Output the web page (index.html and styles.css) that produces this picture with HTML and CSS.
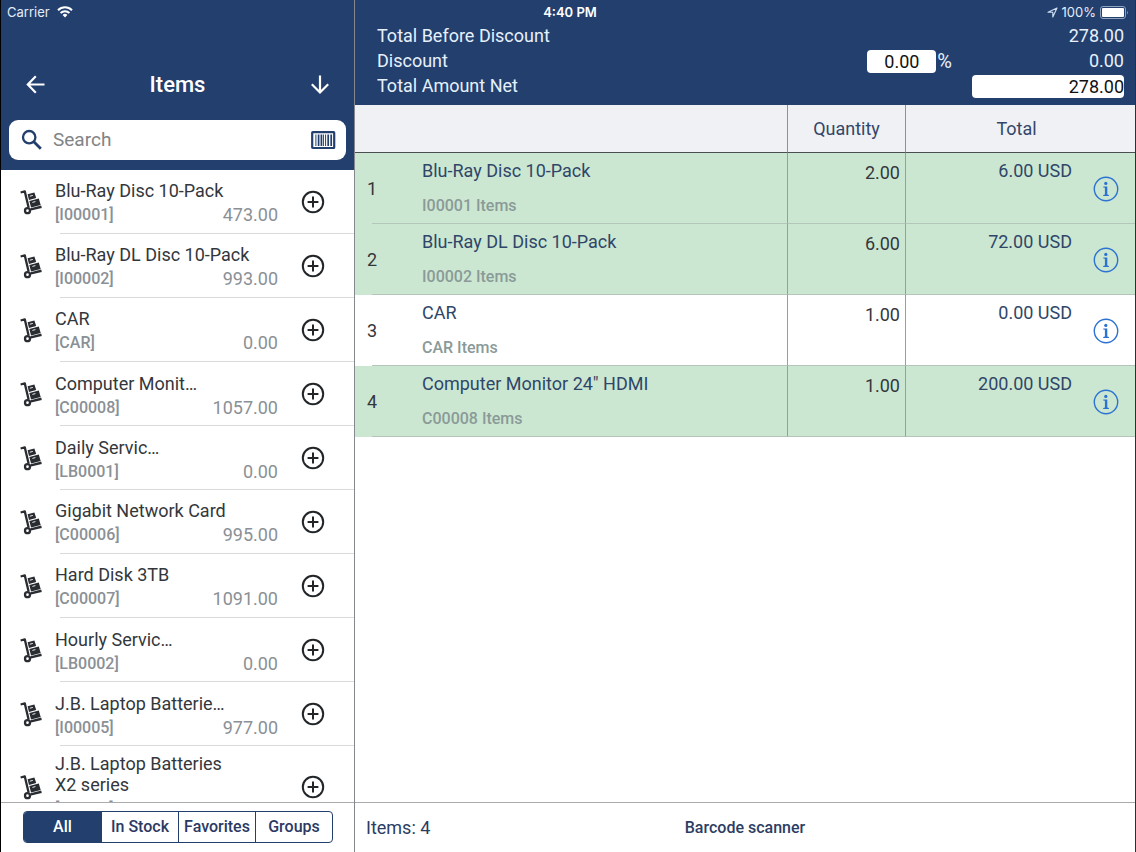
FILE: index.html
```html
<!DOCTYPE html>
<html lang="en">
<head>
<meta charset="utf-8">
<title>Items</title>
<link rel="stylesheet" href="styles.css">
</head>
<body>
<svg class="sprite" aria-hidden="true">
  <symbol id="dolly" viewBox="0 0 22 25">
    <path d="M.6 2.5 4.8 1.4 8.6 17.4" fill="none" stroke="currentColor" stroke-width="2.3" stroke-linejoin="round"/>
    <circle cx="7.5" cy="20.7" r="2.5" fill="none" stroke="currentColor" stroke-width="2.3"/>
    <path d="M10.8 19.4 21.5 16.8" stroke="currentColor" stroke-width="2.5"/>
    <path d="M7.6 4.2 14.4 2.4 16.2 8 9 9.9Z" fill="currentColor"/>
    <path d="M9.3 10.9 18.8 8.5 20.7 15.1 11.1 17.5Z" fill="currentColor"/>
    <path d="M9.8 6.2 12.8 5.4M12.4 12.4 15.4 11.6" stroke="#fff" stroke-width=".9"/>
  </symbol>
  <symbol id="plus" viewBox="0 0 24 24">
    <circle cx="12" cy="12" r="10.2" fill="none" stroke="currentColor" stroke-width="2"/>
    <path d="M12 6.6V17.4M6.6 12H17.4" stroke="currentColor" stroke-width="2"/>
  </symbol>
  <symbol id="info" viewBox="0 0 26 26">
    <circle cx="13" cy="13" r="11.7" fill="none" stroke="currentColor" stroke-width="1.4"/>
    <circle cx="12.8" cy="7.4" r="1.6" fill="currentColor"/>
    <path d="M10.3 10.4H14.3V18.6L15.9 19V20H10.2V19L11.9 18.6V11.8L10.3 11.4Z" fill="currentColor"/>
  </symbol>
</svg>

<div class="app">
  <div class="status">
    <div class="status-left">Carrier
      <svg width="16" height="12" viewBox="0 0 16 12"><path d="M1 4.2A10 10 0 0 1 15 4.2M3.6 7A6.3 6.3 0 0 1 12.4 7" fill="none" stroke="#fff" stroke-width="2"/><path d="M8 11.6 5.6 9A3.4 3.4 0 0 1 10.4 9Z" fill="#fff"/></svg>
    </div>
    <div class="status-time">4:40 PM</div>
    <div class="status-right">
      <svg width="11" height="11" viewBox="0 0 11 11"><path d="M10 1 1 5.2H5.8V10Z" fill="none" stroke="#cfe0f5" stroke-width="1.1" stroke-linejoin="round"/></svg>
      <span>100%</span>
      <svg width="29" height="13" viewBox="0 0 29 13"><rect x=".5" y=".5" width="25" height="12" rx="2.5" fill="none" stroke="#8fa3c0"/><rect x="2" y="2" width="22" height="9" rx="1" fill="#fff"/><path d="M27 4.5Q28.6 6.5 27 8.5Z" fill="#8fa3c0"/></svg>
    </div>
  </div>

  <aside class="side">
    <header class="side-head">
      <div class="nav">
        <button class="icon-btn" aria-label="Back"><svg width="24" height="24" viewBox="0 0 24 24"><path d="M21.5 11.5H5M12.8 3.3 4.8 11.5 12.8 19.7" fill="none" stroke="currentColor" stroke-width="2.2"/></svg></button>
        <h1>Items</h1>
        <button class="icon-btn" aria-label="Sort"><svg width="24" height="24" viewBox="0 0 24 24"><path d="M12 2.5V19.5M3.8 11.3 12 19.5 20.2 11.3" fill="none" stroke="currentColor" stroke-width="2.2"/></svg></button>
      </div>
      <div class="search">
        <svg width="22" height="22" viewBox="0 0 22 22"><circle cx="8.2" cy="8.2" r="6.2" fill="none" stroke="#233f6d" stroke-width="2.3"/><path d="M12.8 12.8 19.8 19.8" stroke="#233f6d" stroke-width="2.8"/></svg>
        <input type="text" placeholder="Search" aria-label="Search">
        <button class="icon-btn" aria-label="Scan barcode"><svg width="26" height="20" viewBox="0 0 26 20"><rect x="2.2" y="2.2" width="22" height="15.8" rx=".6" fill="none" stroke="#233f6d" stroke-width="2.2"/><path d="M5.9 4.5V16M13.4 4.5V16M15.6 4.5V16" stroke="#233f6d" stroke-width="1"/><path d="M8.6 4.5V16M11.4 4.5V16M18.2 4.5V16M21.2 4.5V16" stroke="#233f6d" stroke-width="1.7"/></svg></button>
      </div>
    </header>

    <ul class="items">
      <li><svg class="dolly"><use href="#dolly"/></svg><div class="info"><p class="name">Blu-Ray Disc 10-Pack</p><p class="meta"><span>[I00001]</span><b>473.00</b></p></div><button class="icon-btn add" aria-label="Add Blu-Ray Disc 10-Pack"><svg><use href="#plus"/></svg></button></li>
      <li><svg class="dolly"><use href="#dolly"/></svg><div class="info"><p class="name">Blu-Ray DL Disc 10-Pack</p><p class="meta"><span>[I00002]</span><b>993.00</b></p></div><button class="icon-btn add" aria-label="Add Blu-Ray DL Disc 10-Pack"><svg><use href="#plus"/></svg></button></li>
      <li><svg class="dolly"><use href="#dolly"/></svg><div class="info"><p class="name">CAR</p><p class="meta"><span>[CAR]</span><b>0.00</b></p></div><button class="icon-btn add" aria-label="Add CAR"><svg><use href="#plus"/></svg></button></li>
      <li class="cut"><svg class="dolly"><use href="#dolly"/></svg><div class="info"><p class="name">Computer Monit…</p><p class="meta"><span>[C00008]</span><b>1057.00</b></p></div><button class="icon-btn add" aria-label="Add Computer Monitor"><svg><use href="#plus"/></svg></button></li>
      <li class="cut"><svg class="dolly"><use href="#dolly"/></svg><div class="info"><p class="name">Daily Servic…</p><p class="meta"><span>[LB0001]</span><b>0.00</b></p></div><button class="icon-btn add" aria-label="Add Daily Service"><svg><use href="#plus"/></svg></button></li>
      <li><svg class="dolly"><use href="#dolly"/></svg><div class="info"><p class="name">Gigabit Network Card</p><p class="meta"><span>[C00006]</span><b>995.00</b></p></div><button class="icon-btn add" aria-label="Add Gigabit Network Card"><svg><use href="#plus"/></svg></button></li>
      <li><svg class="dolly"><use href="#dolly"/></svg><div class="info"><p class="name">Hard Disk 3TB</p><p class="meta"><span>[C00007]</span><b>1091.00</b></p></div><button class="icon-btn add" aria-label="Add Hard Disk 3TB"><svg><use href="#plus"/></svg></button></li>
      <li class="cut"><svg class="dolly"><use href="#dolly"/></svg><div class="info"><p class="name">Hourly Servic…</p><p class="meta"><span>[LB0002]</span><b>0.00</b></p></div><button class="icon-btn add" aria-label="Add Hourly Service"><svg><use href="#plus"/></svg></button></li>
      <li class="cut"><svg class="dolly"><use href="#dolly"/></svg><div class="info"><p class="name">J.B. Laptop Batterie…</p><p class="meta"><span>[I00005]</span><b>977.00</b></p></div><button class="icon-btn add" aria-label="Add J.B. Laptop Batteries"><svg><use href="#plus"/></svg></button></li>
      <li class="tall"><svg class="dolly"><use href="#dolly"/></svg><div class="info"><p class="name">J.B. Laptop Batteries<br>X2 series</p><p class="meta"><span>[I00004]</span><b>944.00</b></p></div><button class="icon-btn add" aria-label="Add J.B. Laptop Batteries X2 series"><svg><use href="#plus"/></svg></button></li>
    </ul>

    <footer class="side-foot">
      <div class="segments">
        <button class="on">All</button><button>In Stock</button><button>Favorites</button><button>Groups</button>
      </div>
    </footer>
  </aside>

  <main class="main">
    <header class="totals">
      <div class="line"><span>Total Before Discount</span><output>278.00</output></div>
      <div class="line"><label for="discount">Discount</label><span class="percent"><input id="discount" type="text" value="0.00">%</span><output>0.00</output></div>
      <div class="line"><label for="net">Total Amount Net</label><input id="net" type="text" value="278.00"></div>
    </header>

    <div class="lines">
      <table>
        <colgroup><col class="c-num"><col><col class="c-qty"><col class="c-total"></colgroup>
        <thead><tr><th colspan="2"></th><th>Quantity</th><th>Total</th></tr></thead>
        <tbody>
          <tr class="green"><td class="num">1</td><td><p class="title">Blu-Ray Disc 10-Pack</p><p class="sub">I00001 Items</p></td><td class="qty">2.00</td><td><div class="sum"><span>6.00 USD</span><button class="icon-btn detail" aria-label="Details of line 1"><svg><use href="#info"/></svg></button></div></td></tr>
          <tr class="green"><td class="num">2</td><td><p class="title">Blu-Ray DL Disc 10-Pack</p><p class="sub">I00002 Items</p></td><td class="qty">6.00</td><td><div class="sum"><span>72.00 USD</span><button class="icon-btn detail" aria-label="Details of line 2"><svg><use href="#info"/></svg></button></div></td></tr>
          <tr><td class="num">3</td><td><p class="title">CAR</p><p class="sub">CAR Items</p></td><td class="qty">1.00</td><td><div class="sum"><span>0.00 USD</span><button class="icon-btn detail" aria-label="Details of line 3"><svg><use href="#info"/></svg></button></div></td></tr>
          <tr class="green"><td class="num">4</td><td><p class="title">Computer Monitor 24" HDMI</p><p class="sub">C00008 Items</p></td><td class="qty">1.00</td><td><div class="sum"><span>200.00 USD</span><button class="icon-btn detail" aria-label="Details of line 4"><svg><use href="#info"/></svg></button></div></td></tr>
        </tbody>
      </table>
    </div>

    <footer class="main-foot">
      <span>Items: 4</span>
      <button class="scanner">Barcode scanner</button>
      <span></span>
    </footer>
  </main>
</div>
</body>
</html>
```
FILE: styles.css
```css
:root {
  --navy: #233f6d;
  --ink: #33373c;
  --gray: #8a9095;
  --rule: #d9dadb;
}

* { box-sizing: border-box; }

body {
  margin: 0;
  font: 18px/22px Roboto, "Liberation Sans", sans-serif;
  color: var(--ink);
  background: #fff;
}

p, h1, ul { margin: 0; padding: 0; }

button, input { font: inherit; color: inherit; }

.sprite { position: absolute; width: 0; height: 0; }

.icon-btn {
  display: flex;
  padding: 0;
  border: 0;
  background: none;
}

.app {
  position: relative;
  display: grid;
  grid-template-columns: 355px 1fr;
  height: 100vh;
  border-right: 1px solid #2b2f36;
  overflow: hidden;
}

/* Status bar, laid over both panes */
.status {
  position: absolute;
  inset: 0 0 auto 0;
  display: grid;
  grid-template-columns: 1fr auto 1fr;
  align-items: center;
  height: 24px;
  padding: 0 6px 0 7px;
  font: 13px/24px Inter, "Liberation Sans", sans-serif;
  color: #e3edfa;
}
.status-left, .status-right { display: flex; align-items: center; gap: 7px; }
.status-right { justify-content: flex-end; gap: 4px; }
.status-time { padding-left: 4px; font-weight: 600; color: #fff; }

/* Left pane */
.side {
  display: flex;
  flex-direction: column;
  min-height: 0;
  border-left: 1px solid #000;
  border-right: 1px solid #85898f;
}
.side-head {
  display: flex;
  flex-direction: column;
  gap: 22px;
  height: 170px;
  padding: 71px 8px 0;
  background: var(--navy);
  flex: none;
}
.nav {
  display: flex;
  align-items: center;
  justify-content: space-between;
  height: 27px;
  padding: 0 14px;
  color: #fff;
}
h1 { font-size: 22px; line-height: 26px; font-weight: 500; }
.search {
  display: flex;
  align-items: center;
  gap: 10px;
  height: 40px;
  padding: 0 10px 0 12px;
  border-radius: 9px;
  background: #fff;
}
.search input {
  flex: 1;
  min-width: 0;
  padding: 0;
  border: 0;
  outline: 0;
  background: none;
  font-size: 19px;
}
.search input::placeholder { color: #818385; opacity: 1; }

.items {
  flex: 1;
  min-height: 0;
  overflow: hidden;
  list-style: none;
}
.items li {
  display: flex;
  align-items: center;
  min-height: 64px;
  padding: 0 29px 0 19px;
  background: linear-gradient(var(--rule), var(--rule)) 59px 100% / 100% 1px no-repeat;
}
.dolly { width: 22px; height: 25px; flex: none; color: #292d31; }
.info { flex: 1; margin: 0 23px 0 13px; padding: 9px 0; }
.cut .info { padding: 10px 0 8px; }
.tall .info { padding: 7px 0 9px; }
.name { line-height: 21px; white-space: nowrap; }
.meta {
  display: flex;
  justify-content: space-between;
  margin-top: 4px;
  font-size: 16px;
  line-height: 20px;
  font-weight: 500;
  color: var(--gray);
}
.meta b { font-size: 18px; font-weight: 400; }
.add { color: #222629; }
.add svg { width: 24px; height: 24px; }

.side-foot {
  flex: none;
  height: 50px;
  padding: 8px 21px 0 22px;
  border-top: 1px solid #a9abae;
}
.segments {
  display: grid;
  grid-template-columns: repeat(4, 1fr);
  height: 32px;
  border: 1px solid var(--navy);
  border-radius: 4px;
  overflow: hidden;
}
.segments button {
  padding: 0;
  border: 0;
  background: none;
  color: #2c3963;
  font-size: 16px;
  font-weight: 500;
  white-space: nowrap;
}
.segments button + button { border-left: 1px solid var(--navy); }
.segments .on { background: var(--navy); color: #fff; }

/* Right pane */
.main {
  display: flex;
  flex-direction: column;
  min-width: 0;
  min-height: 0;
}
.totals {
  display: flex;
  flex-direction: column;
  gap: 1px;
  padding: 24px 11px 7px 22px;
  background: var(--navy);
  color: #e6f1fc;
}
.line { display: flex; align-items: center; height: 24px; }
.line > :first-child { flex: 1; }
.totals output { width: 152px; text-align: right; }
.totals input {
  height: 23px;
  padding: 0;
  border: 0;
  border-radius: 4px;
  background: #fff;
  color: #111;
}
.percent { display: flex; align-items: center; gap: 1px; font-size: 20px; margin-right: 20px; }
#discount { width: 69px; text-align: center; font-size: 18px; }
#net { width: 152px; text-align: right; }

.lines { flex: 1; min-height: 0; overflow: hidden; }
table { width: 100%; table-layout: fixed; border-collapse: separate; border-spacing: 0; }
.c-num { width: 59px; }
.c-qty { width: 118px; }
.c-total { width: 229px; }
th {
  height: 48px;
  padding: 0;
  background: #eff1f4;
  border-bottom: 1px solid #4b4f52;
  color: #334669;
  font-weight: 400;
}
th:nth-child(1), th:nth-child(2) { border-right: 1px solid #8d9296; }
th:last-child { padding-right: 8px; }
td {
  height: 71px;
  padding: 7px 5px 7px 8px;
  vertical-align: top;
  border-bottom: 1px solid #b4c6b9;
}
td:nth-child(2), td:nth-child(3) { border-right: 1px solid #93a198; }
.green { background: #cce7d1; }
.num {
  padding: 25px 0 0 12px;
  border-bottom: 0;
  background: linear-gradient(#b4c6b9, #b4c6b9) 17px 100% / 100% 1px no-repeat;
}
.title { color: #2f4669; }
.sub { margin-top: 14px; font-size: 16px; line-height: 20px; font-weight: 500; color: #8a9a98; }
.qty { padding-top: 9px; text-align: right; }
.sum {
  display: flex;
  justify-content: flex-end;
  gap: 21px;
  padding-right: 11px;
  color: #2f4669;
}
.detail { align-self: flex-start; margin-top: 16px; color: #2b72d2; }
.detail svg { width: 26px; height: 26px; }

.main-foot {
  display: grid;
  grid-template-columns: 1fr auto 1fr;
  align-items: center;
  height: 50px;
  padding: 0 11px;
  border-top: 1px solid #a9abae;
  color: #2c3d63;
}
.scanner {
  padding: 0;
  border: 0;
  background: none;
  font-size: 16px;
  font-weight: 500;
}
```
